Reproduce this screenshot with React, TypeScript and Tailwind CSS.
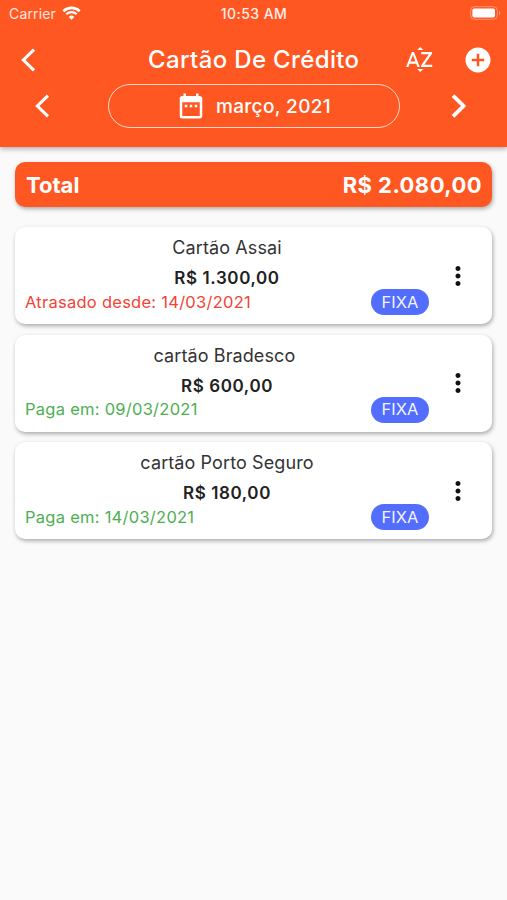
import { MdAddCircle, MdDateRange, MdMoreVert, MdSortByAlpha } from "react-icons/md";

type Bill = {
  name: string;
  amount: string;
  status: string;
  late: boolean;
};

const bills: Bill[] = [
  {
    name: "Cartão Assai",
    amount: "R$ 1.300,00",
    status: "Atrasado desde: 14/03/2021",
    late: true,
  },
  {
    name: "cartão Bradesco ",
    amount: "R$ 600,00",
    status: "Paga em: 09/03/2021",
    late: false,
  },
  {
    name: "cartão Porto Seguro",
    amount: "R$ 180,00",
    status: "Paga em: 14/03/2021",
    late: false,
  },
];

const Chevron = ({ right = false }: { right?: boolean }) => (
  <svg
    viewBox="0 0 15 24"
    className={`h-6 w-[15px] shrink-0 ${right ? "rotate-180" : ""}`}
    fill="none"
  >
    <path
      d="M13 1.6 2.4 12 13 22.4"
      stroke="currentColor"
      strokeWidth={right ? 3.8 : 3.1}
    />
  </svg>
);

const StatusBar = () => (
  <div className="grid h-[27px] grid-cols-[1fr_auto_1fr] items-center pl-[9px] pr-[6px]">
    <div className="flex items-center gap-[6px] text-[14px] tracking-[0.15px] text-white/85">
      Carrier
      <svg viewBox="0 0 19 14" className="-mt-px h-[14px] w-[19px] text-white" fill="none">
        <path d="M1.3 5.2a11.8 11.8 0 0 1 16.4 0" stroke="currentColor" strokeWidth="2.6" />
        <path d="M4.3 8.3a7.5 7.5 0 0 1 10.4 0" stroke="currentColor" strokeWidth="2.2" />
        <path d="M6.7 10.9a4.1 4.1 0 0 1 5.6 0l-2.8 2.9z" fill="currentColor" />
      </svg>
    </div>
    <div className="-translate-x-[1px] text-center text-[14px] font-medium tracking-[0.45px] text-white/90">
      10:53 AM
    </div>
    <svg viewBox="0 0 31 14" className="-mt-px h-[14px] w-[31px] justify-self-end" fill="none">
      <rect x="0.7" y="0.7" width="26.6" height="12.6" rx="3.8" stroke="white" strokeOpacity="0.35" />
      <rect x="2.4" y="2.4" width="22.6" height="9.2" rx="1.8" fill="white" />
      <path d="M29 4.8v4.4c1.6-.6 1.6-3.8 0-4.4z" fill="white" fillOpacity="0.45" />
    </svg>
  </div>
);

const Header = () => (
  <header className="h-[147px] bg-[#ff5722] text-white shadow-[0_2px_5px_rgba(0,0,0,0.3)]">
    <StatusBar />
    <div className="grid h-[65px] grid-cols-[1fr_auto_1fr] items-center pl-[20.5px] pr-[14px]">
      <button className="w-fit">
        <Chevron />
      </button>
      <h1 className="-translate-x-[3px] text-[24px] font-medium tracking-[0.35px]">
        Cartão De Crédito
      </h1>
      <div className="flex items-center gap-[28px] justify-self-end">
        <MdSortByAlpha className="size-[31px]" />
        <MdAddCircle className="size-[30px]" />
      </div>
    </div>
    <div className="-mt-2 flex items-center pl-[35px] pr-[41.5px]">
      <button>
        <Chevron />
      </button>
      <button className="ml-[58px] mr-auto flex h-[44px] w-[292px] items-center justify-center gap-[10px] rounded-full border-[1.4px] border-white/75 pr-px">
        <MdDateRange className="size-[30px]" />
        <span className="pt-[2px] text-[19px] font-medium tracking-[0.35px]">março, 2021</span>
      </button>
      <button>
        <Chevron right />
      </button>
    </div>
  </header>
);

const BillCard = ({ bill }: { bill: Bill }) => (
  <li className="flex h-[97px] rounded-[10px] bg-white pl-[10px] shadow-[1px_2px_4px_rgba(0,0,0,0.32)]">
    <div className="flex w-[404px] flex-col">
      <div className="mt-[8px] whitespace-break-spaces text-center text-[18px] leading-[25px] tracking-[0.1px] text-[#333]">
        {bill.name}
      </div>
      <div className="mt-[7px] text-center text-[17px] font-semibold leading-[22px] tracking-[0.6px] text-[#212121]">
        {bill.amount}
      </div>
      <div className="flex items-center justify-between">
        <span
          className={`text-[16.5px] tracking-[0.26px] ${
            bill.late ? "text-[#f44336]" : "text-[#4caf50]"
          }`}
        >
          {bill.status}
        </span>
        <span className="flex h-[26px] w-[58px] items-center justify-center rounded-full bg-[#536dfe] text-[16.5px] text-white/95">
          FIXA
        </span>
      </div>
    </div>
    <button className="flex w-[58px] items-center justify-center text-[#111]">
      <MdMoreVert className="size-[30px]" />
    </button>
  </li>
);

const App = () => {
  return (
    <div className="min-h-[900px] bg-[#fafafa] font-['Inter','Liberation_Sans',sans-serif]">
      <Header />
      <main className="px-[15px] pt-[15px]">
        <div className="flex h-[45px] items-center justify-between rounded-[10px] bg-[#ff5722] pl-[11px] pr-[10px] pt-px text-[22px] font-bold text-white shadow-[1px_2px_4px_rgba(0,0,0,0.32)]">
          <span>Total</span>
          <span className="tracking-[0.45px]">R$ 2.080,00</span>
        </div>
        <ul className="mt-[20px] flex flex-col gap-[10.5px]">
          {bills.map((bill) => (
            <BillCard key={bill.name} bill={bill} />
          ))}
        </ul>
      </main>
    </div>
  );
};

export default App;
